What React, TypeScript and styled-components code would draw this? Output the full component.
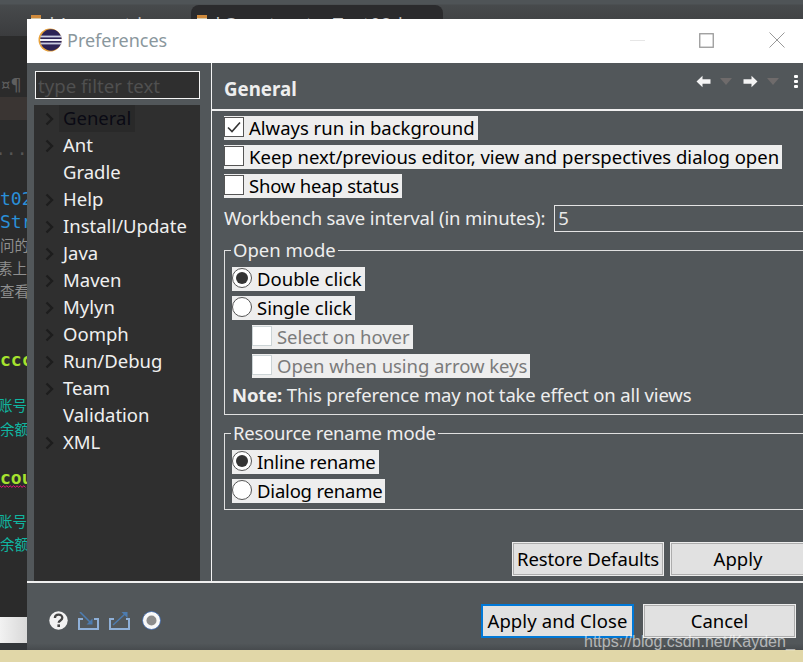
import React from "react";
import styled, { createGlobalStyle } from "styled-components";

const Global = createGlobalStyle`
  html, body { margin: 0; padding: 0; background: #2b2b2b; }
  body { width: 803px; height: 662px; overflow: hidden; font-family: "Noto Sans", "Open Sans", sans-serif; }
  * { box-sizing: border-box; }
`;

const Desktop = styled.div`
  position: relative;
  width: 803px;
  height: 662px;
  display: flex;
  flex-direction: column;
  overflow: hidden;
`;
const TabBar = styled.div`
  height: 36px;
  flex: none;
  padding: 5px 0 0 31px;
  display: flex;
  background: linear-gradient(#4f5457 0, #4f5457 4px, #474a4c 5px, #3b3c3e 100%);
`;
const Tab = styled.div<{ $active?: boolean }>`
  width: ${p => (p.$active ? 252 : 160)}px;
  height: 31px;
  padding: 7px 8px 0 ${p => (p.$active ? 6 : 0)}px;
  border-radius: 8px 8px 0 0;
  background: ${p => (p.$active ? "#2b2b2d" : "transparent")};
  color: #c8c8c8;
  font-size: 18px;
  letter-spacing: 0.8px;
  white-space: nowrap;
  display: flex;
  gap: 6px;
`;
const TabIcon = styled.span`
  width: 10px;
  height: 12px;
  margin-top: 3px;
  flex: none;
  background: #d8c8a8;
  border-top: 3px solid #d08a3c;
`;
const TabClose = styled.span`
  margin-left: auto;
`;
const Editor = styled.div`
  flex: 1;
  width: 27px;
  padding-top: 38px;
  overflow: hidden;
  svg { display: block; }
`;
const Line = styled.div<{ $color?: string; $bg?: string; $h?: number; $bold?: boolean }>`
  height: ${p => p.$h || 22.9}px;
  width: 27px;
  overflow: hidden;
  white-space: nowrap;
  font: ${p => (p.$bold ? 700 : 400)} 18px/22.9px "DejaVu Sans Mono", "Noto Sans CJK SC", monospace;
  color: ${p => p.$color || "#aaa"};
  background: ${p => p.$bg || "transparent"};
`;
const CjkLine = styled(Line)<{ $shift?: number }>`
  font: 14.5px/22.9px "Noto Sans CJK SC", sans-serif;
  text-indent: ${p => p.$shift || 0}px;
`;
const DotLine = styled(Line)`
  text-indent: -5px;
`;
const TaskBar = styled.div`
  height: 26px;
  width: 27px;
  flex: none;
  margin-top: 3px;
  background: linear-gradient(90deg, #f2f2f2, #d8d8d8);
`;
const EditorFoot = styled.div`
  height: 7px;
  flex: none;
  width: 27px;
  background: #33373a;
`;
const Sand = styled.div`
  height: 12px;
  flex: none;
  background: #e1d7a8;
`;

const Dialog = styled.div`
  position: absolute;
  left: 27px;
  top: 19px;
  width: 776px;
  height: 631px;
  display: flex;
  flex-direction: column;
  background: #52575a;
`;
const TitleBar = styled.div`
  height: 44px;
  flex: none;
  display: flex;
  align-items: center;
  padding: 0 0 2px 11px;
  background: #fff;
`;
const Title = styled.div`
  margin: 0 0 0 5px;
  font-size: 18px;
  color: #8a979d;
  flex: 1;
`;
const WinBtns = styled.div`
  display: flex;
  align-items: center;
  margin-right: 18px;
  gap: 54px;
  svg:last-child { margin-left: 1px; }
`;
const Main = styled.div`
  height: 520px;
  flex: none;
  display: flex;
  border-bottom: 2px solid #f0f0f0;
`;
const LeftPane = styled.div`
  width: 184px;
  flex: none;
  padding: 8px 0 0 7px;
  display: flex;
  flex-direction: column;
  gap: 6px;
`;
const Filter = styled.div`
  width: 165px;
  height: 28px;
  margin-left: 1px;
  border: 1px solid #f4f4f4;
  background: #2f2f2f;
  color: #505050;
  font-size: 18.6px;
  line-height: 27px;
  padding-left: 2px;
`;
const Tree = styled.div`
  width: 166px;
  flex: 1;
  background: #2f2f2f;
  display: flex;
  flex-direction: column;
`;
const TreeRow = styled.div`
  height: 27px;
  flex: none;
  display: flex;
  align-items: center;
  padding-left: 11px;
`;
const ChevronSlot = styled.span`
  width: 14px;
  height: 27px;
  flex: none;
  display: flex;
  align-items: center;
`;
const TreeLabel = styled.span<{ $selected?: boolean }>`
  height: 27px;
  line-height: 26px;
  padding: 0 4px;
  font-size: 18.5px;
  color: ${p => (p.$selected ? "#0a0a14" : "#f0f0f0")};
  background: ${p => (p.$selected ? "#292929" : "transparent")};
`;
const RightPane = styled.div`
  flex: 1;
  min-width: 0;
  border-left: 1px solid #f4f4f4;
  display: flex;
  flex-direction: column;
  overflow: hidden;
`;
const PaneHeader = styled.div`
  height: 48px;
  flex: none;
  padding: 0 0 2px 12px;
  display: flex;
  align-items: center;
  justify-content: space-between;
  border-bottom: 2px solid #f0f0f0;
`;
const PaneTitle = styled.div`
  font-size: 18.7px;
  font-weight: 700;
  color: #eee;
  margin-top: 7px;
`;
const PaneTools = styled.div`
  display: flex;
  align-items: center;
  margin-top: -8px;
  padding-right: 5px;
`;
const ToolGap = styled.span<{ $w: number }>`
  width: ${p => p.$w}px;
`;
const PaneBody = styled.div`
  flex: 1;
  padding: 5px 0 0 12px;
  display: flex;
  flex-direction: column;
  width: 700px;
`;
const Stack = styled.div`
  display: flex;
  flex-direction: column;
  gap: 5px;
  align-items: flex-start;
`;
const Choice = styled.div<{ $disabled?: boolean; $indent?: boolean; $tight?: boolean }>`
  height: 24px;
  display: inline-flex;
  align-items: center;
  gap: 5px;
  padding: 0 3px 2px 0;
  background: #eeeeee;
  font-size: 18.5px;
  white-space: nowrap;
  margin-left: ${p => (p.$indent ? 20 : 0)}px;
  letter-spacing: ${p => (p.$tight ? "-0.2px" : p.$disabled ? "-0.05px" : "0")};
  color: ${p => (p.$disabled ? "#7b7b7b" : "#000")};
`;
const CheckBox = styled.span<{ $disabled?: boolean }>`
  width: 20px;
  height: 20px;
  flex: none;
  background: #fff;
  border: 1px solid ${p => (p.$disabled ? "#ccd4d6" : "#555")};
  display: flex;
  align-items: center;
  justify-content: center;
`;
const Radio = styled.span<{ $on?: boolean }>`
  width: 20px;
  height: 20px;
  flex: none;
  border-radius: 50%;
  background: #fff;
  border: 1px solid #555;
  display: flex;
  align-items: center;
  justify-content: center;
  &::after {
    content: "";
    display: ${p => (p.$on ? "block" : "none")};
    width: 12px;
    height: 12px;
    border-radius: 50%;
    background: #333;
  }
`;
const IntervalRow = styled.div`
  margin-top: 7px;
  height: 27px;
  display: flex;
  align-items: center;
  font-size: 18.5px;
  letter-spacing: -0.13px;
  color: #eee;
  white-space: nowrap;
`;
const IntervalLabel = styled.span`
  margin-top: -2px;
`;
const IntervalInput = styled.div`
  margin-left: 9px;
  width: 300px;
  height: 27px;
  padding-left: 3px;
  border: 1px solid #e4e4e4;
  line-height: 23px;
  color: #e8e8e8;
`;
const Group = styled.div<{ $h: number; $mt: number }>`
  position: relative;
  margin-top: ${p => p.$mt}px;
  height: ${p => p.$h}px;
  border: 1px solid #e0e0e0;
  padding: 16px 0 0 7px;
  width: 660px;
  display: flex;
  flex-direction: column;
`;
const Legend = styled.span<{ $tight?: boolean }>`
  position: absolute;
  left: 6px;
  top: -14px;
  height: 26px;
  line-height: 26px;
  padding: 0 2px;
  background: #52575a;
  color: #eee;
  font-size: 18.5px;
  letter-spacing: ${p => (p.$tight ? "-0.22px" : "0")};
`;
const Note = styled.div`
  margin-top: 3px;
  font-size: 18.5px;
  line-height: 27px;
  letter-spacing: -0.14px;
  color: #eee;
  white-space: nowrap;
  b { font-weight: 700; }
`;
const PaneActions = styled.div`
  margin-top: 32px;
  display: flex;
  gap: 6px;
  margin-left: 288px;
`;
const Btn = styled.div<{ $primary?: boolean; $w?: number }>`
  width: ${p => p.$w || 153}px;
  height: 34px;
  flex: none;
  display: flex;
  align-items: center;
  justify-content: center;
  padding-bottom: 2px;
  background: #e1e1e1;
  color: #000;
  font-size: 18.5px;
  white-space: nowrap;
  letter-spacing: ${p => (p.$primary ? "0.1px" : "0")};
  border: ${p => (p.$primary ? "2px solid #0078d7" : "1px solid #ececec")};
  box-shadow: ${p => (p.$primary ? "none" : "inset 0 0 0 1px #adadad")};
`;
const RestoreBtn = styled(Btn)`
  letter-spacing: -0.1px;
`;
const Footer = styled.div`
  flex: 1;
  display: flex;
  align-items: flex-start;
  justify-content: space-between;
  padding: 21px 7px 0 22px;
  background: linear-gradient(#52575a 0, #52575a 90%, #474b4e 100%);
`;
const FootIcons = styled.div`
  display: flex;
  align-items: center;
  gap: 10px;
  margin-top: 7px;
  svg:last-child { margin-left: 2px; }
`;
const FootBtns = styled.div`
  display: flex;
  gap: 9px;
`;
const Watermark = styled.div`
  position: absolute;
  left: 584px;
  top: 632px;
  font: 16px/20px "Liberation Sans", sans-serif;
  color: rgba(255, 255, 255, 0.58);
  white-space: nowrap;
`;

const Squiggle = () => (
  <svg width="27" height="3" viewBox="0 0 27 3">
    <path d="M0 .8l1.7 1.5 1.7-1.5 1.7 1.5 1.7-1.5 1.7 1.5 1.7-1.5 1.7 1.5 1.7-1.5 1.7 1.5 1.7-1.5 1.7 1.5 1.7-1.5 1.7 1.5 1.7-1.5 1.7 1.5" fill="none" stroke="#f0127e" strokeWidth="1" />
  </svg>
);
const Chevron = () => (
  <svg width="9" height="14" viewBox="0 0 9 14">
    <path d="M1.5 1.5 7 7l-5.5 5.5" fill="none" stroke="#1d1d1d" strokeWidth="2.4" />
  </svg>
);
const Check = () => (
  <svg width="16" height="14" viewBox="0 0 16 14">
    <path d="M2 7.5 6 11.5 14 2.5" fill="none" stroke="#333" strokeWidth="1.6" />
  </svg>
);
const EclipseLogo = () => (
  <svg width="24" height="24" viewBox="0 0 24 24">
    <circle cx="12" cy="12" r="11.5" fill="#e8a13a" />
    <circle cx="13" cy="12" r="10.7" fill="#2c2255" />
    <rect x="2.5" y="7.6" width="21" height="1.8" fill="#c9cbe0" />
    <rect x="2" y="11" width="22" height="2" fill="#f2f2f8" />
    <rect x="2.5" y="14.6" width="21" height="1.8" fill="#c9cbe0" />
  </svg>
);
const MinIcon = () => (
  <svg width="15" height="15" viewBox="0 0 15 15"><path d="M0 7.5h15" stroke="#e6e6e6" strokeWidth="1" /></svg>
);
const MaxIcon = () => (
  <svg width="15" height="15" viewBox="0 0 15 15"><rect x=".75" y=".75" width="13.5" height="13.5" fill="none" stroke="#999" strokeWidth="1.3" /></svg>
);
const CloseIcon = () => (
  <svg width="16" height="16" viewBox="0 0 16 16"><path d="M.5.5l15 15M15.5.5l-15 15" stroke="#999" strokeWidth="1" /></svg>
);
const ArrowIcon = ({ flip }: { flip?: boolean }) => (
  <svg width="15" height="13" viewBox="0 0 15 13" style={flip ? { transform: "scaleX(-1)" } : undefined}>
    <path d="M0.5 6.5 6.5 .8v3.4h8v4.6h-8v3.4z" fill="#f4f4f4" />
  </svg>
);
const DropIcon = () => (
  <svg width="12" height="7" viewBox="0 0 12 7"><path d="M0 0h12L6 7z" fill="#6f6b6b" /></svg>
);
const DotsIcon = () => (
  <svg width="4" height="13" viewBox="0 0 4 13">
    <rect y="0" width="4" height="3" rx="1" fill="#fff" />
    <rect y="5" width="4" height="3" rx="1" fill="#fff" />
    <rect y="10" width="4" height="3" rx="1" fill="#fff" />
  </svg>
);
const HelpIcon = () => (
  <svg width="19" height="19" viewBox="0 0 19 19">
    <circle cx="9.5" cy="9.5" r="9.2" fill="#f2f2f2" />
    <path d="M5.9 7c0-4.4 7.4-4.4 7.4-.2 0 2.8-3.6 2.5-3.6 5" fill="none" stroke="#444" strokeWidth="2.3" />
    <rect x="8.4" y="13.4" width="2.6" height="2.6" fill="#444" />
  </svg>
);
const ImportIcon = () => (
  <svg width="21" height="18" viewBox="0 0 21 18">
    <path d="M5 7H1v10h19V7h-4" fill="none" stroke="#8fb0d8" strokeWidth="2" />
    <path d="M2 0l11 11" stroke="#4d7cb0" strokeWidth="1.5" />
    <path d="M14.5 12.5H8.5L14.5 6.5z" fill="#4d7cb0" />
  </svg>
);
const ExportIcon = () => (
  <svg width="21" height="18" viewBox="0 0 21 18">
    <path d="M5 7H1v10h19V7h-3" fill="none" stroke="#8fb0d8" strokeWidth="2" />
    <path d="M4 13 16 2" stroke="#4d7cb0" strokeWidth="1.5" />
    <path d="M18.5 0v6l-6-6z" fill="#4d7cb0" />
  </svg>
);
const RecordIcon = () => (
  <svg width="19" height="19" viewBox="0 0 19 19">
    <circle cx="9.5" cy="9.5" r="9" fill="#f8f8f8" stroke="#3d6ab0" strokeWidth=".8" />
    <circle cx="9.5" cy="9.5" r="5" fill="#8c8c8c" />
  </svg>
);

const tree: [string, boolean][] = [
  ["General", true], ["Ant", true], ["Gradle", false], ["Help", true], ["Install/Update", true],
  ["Java", true], ["Maven", true], ["Mylyn", true], ["Oomph", true], ["Run/Debug", true],
  ["Team", true], ["Validation", false], ["XML", true],
];

export default function App() {
  return (
    <Desktop>
      <Global />
      <TabBar>
        <Tab><TabIcon />*Account.java</Tab>
        <Tab $active><TabIcon />*ConstructorTest02.java<TabClose>×</TabClose></Tab>
      </TabBar>
      <Editor>
        <Line $color="#5f5f5f">¤¶</Line>
        <Line $bg="#3a3533" />
        <Line />
        <DotLine $color="#555">···</DotLine>
        <Line />
        <Line $color="#2a8fd8">t02</Line>
        <Line $color="#2a8fd8">Str</Line>
        <CjkLine $color="#8f8f8f">问的</CjkLine>
        <CjkLine $color="#8f8f8f" $shift={-2}>素上</CjkLine>
        <CjkLine $color="#8f8f8f">查看</CjkLine>
        <Line />
        <Line />
        <Line $color="#a6e22e" $bold>ccc</Line>
        <Line />
        <CjkLine $color="#10b5a0" $shift={-2} $h={23.9}>账号</CjkLine>
        <CjkLine $color="#10b5a0">余额</CjkLine>
        <Line $h={25.9} />
        <Line $color="#a6e22e" $bold $h={18}>cou</Line>
        <Squiggle />
        <Line $h={21.8} />
        <CjkLine $color="#10b5a0" $shift={-2}>账号</CjkLine>
        <CjkLine $color="#10b5a0">余额</CjkLine>
      </Editor>
      <TaskBar />
      <EditorFoot />
      <Sand />
      <Dialog>
        <TitleBar>
          <EclipseLogo />
          <Title>Preferences</Title>
          <WinBtns>
            <MinIcon />
            <MaxIcon />
            <CloseIcon />
          </WinBtns>
        </TitleBar>
        <Main>
          <LeftPane>
            <Filter>type filter text</Filter>
            <Tree>
              {tree.map(([name, arrow], i) => (
                <TreeRow key={name}>
                  <ChevronSlot>{arrow && <Chevron />}</ChevronSlot>
                  <TreeLabel $selected={i === 0}>{name}</TreeLabel>
                </TreeRow>
              ))}
            </Tree>
          </LeftPane>
          <RightPane>
            <PaneHeader>
              <PaneTitle>General</PaneTitle>
              <PaneTools>
                <ArrowIcon />
                <ToolGap $w={9} />
                <DropIcon />
                <ToolGap $w={11} />
                <ArrowIcon flip />
                <ToolGap $w={9} />
                <DropIcon />
                <ToolGap $w={15} />
                <DotsIcon />
              </PaneTools>
            </PaneHeader>
            <PaneBody>
              <Stack>
                <Choice><CheckBox><Check /></CheckBox>Always run in background</Choice>
                <Choice><CheckBox />Keep next/previous editor, view and perspectives dialog open</Choice>
                <Choice $tight><CheckBox />Show heap status</Choice>
              </Stack>
              <IntervalRow>
                <IntervalLabel>Workbench save interval (in minutes):</IntervalLabel>
                <IntervalInput>5</IntervalInput>
              </IntervalRow>
              <Group $h={165} $mt={18}>
                <Legend>Open mode</Legend>
                <Stack>
                  <Choice><Radio $on />Double click</Choice>
                  <Choice><Radio />Single click</Choice>
                  <Choice $indent $disabled><CheckBox $disabled />Select on hover</Choice>
                  <Choice $indent $disabled><CheckBox $disabled />Open when using arrow keys</Choice>
                </Stack>
                <Note><b>Note:</b> This preference may not take effect on all views</Note>
              </Group>
              <Group $h={77} $mt={18}>
                <Legend $tight>Resource rename mode</Legend>
                <Stack>
                  <Choice $tight><Radio $on />Inline rename</Choice>
                  <Choice $tight><Radio />Dialog rename</Choice>
                </Stack>
              </Group>
              <PaneActions>
                <RestoreBtn $w={152}>Restore Defaults</RestoreBtn>
                <Btn $w={136}>Apply</Btn>
              </PaneActions>
            </PaneBody>
          </RightPane>
        </Main>
        <Footer>
          <FootIcons>
            <HelpIcon />
            <ImportIcon />
            <ExportIcon />
            <RecordIcon />
          </FootIcons>
          <FootBtns>
            <Btn $primary>Apply and Close</Btn>
            <Btn>Cancel</Btn>
          </FootBtns>
        </Footer>
      </Dialog>
      <Watermark>https://blog.csdn.net/Kayden_</Watermark>
    </Desktop>
  );
}
